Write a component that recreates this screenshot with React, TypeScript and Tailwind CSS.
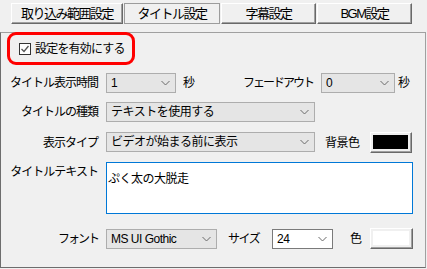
import React from "react";

const FONT = { fontFamily: '"Liberation Sans", "Noto Sans CJK JP", sans-serif' };

function Chevron() {
  return (
    <svg width="9" height="6" viewBox="0 0 9 6" className="ml-auto mr-[5px] shrink-0">
      <polyline points="0.5,1 4.5,5 8.5,1" fill="none" stroke="#6a6a6a" strokeWidth="1" />
    </svg>
  );
}

function Select({ w, text, white }: { w: string; text: string; white?: boolean }) {
  return (
    <div
      className={`flex items-center h-[20px] border pl-[4px] ${w} ${
        white ? "bg-white border-[#7a7a7a]" : "bg-[#e5e5e5] border-[#adadad]"
      }`}
    >
      <span className="text-[12px] leading-none text-black tracking-[-0.5px] whitespace-nowrap">{text}</span>
      <Chevron />
    </div>
  );
}

function Tab({ w, label, active, ml }: { w: string; label: string; active?: boolean; ml: string }) {
  return (
    <div
      className={`${w} ${ml} h-[21px] flex items-center justify-center bg-[#f0f0f0] text-[13px] leading-none tracking-[-1.5px] text-black border ${
        active
          ? "border-[#9c9c9c]"
          : "border-t-white border-l-white border-b-[#696969] border-r-[#696969] shadow-[inset_-1px_-1px_0_#a0a0a0]"
      }`}
    >
      {label}
    </div>
  );
}

function ColorBtn({ color, w }: { color: string; w: string }) {
  return (
    <div className={`${w} h-[21px] bg-[#f0f0f0] border border-t-white border-l-white border-b-[#696969] border-r-[#696969] shadow-[inset_-1px_-1px_0_#a0a0a0] p-[2px] pr-[3px] pb-[3px]`}>
      <div className="w-full h-full" style={{ background: color }} />
    </div>
  );
}

function Label({ children, cls = "" }: { children: React.ReactNode; cls?: string }) {
  return (
    <span className={`w-[97px] text-right text-[12px] leading-none text-black tracking-[-1px] whitespace-nowrap ${cls}`}>
      {children}
    </span>
  );
}

export default function App() {
  return (
    <div className="w-[427px] h-[269px] bg-[#f0f0f0] overflow-hidden" style={FONT}>
      <div className="h-[32px] flex items-start pt-[3px]">
        <Tab ml="ml-[11px]" w="w-[112px]" label="取り込み範囲設定" />
        <Tab ml="ml-[1px]" w="w-[96px]" label="タイトル設定" active />
        <Tab ml="ml-[1px]" w="w-[95px]" label="字幕設定" />
        <Tab ml="ml-[1px]" w="w-[95px]" label="BGM設定" />
      </div>
      <div className="w-[426px] h-[236px] border border-[#a0a0a0] border-l-[#6d6d6d] border-b-[#6d6d6d] flex flex-col">
        {/* enable checkbox */}
        <div className="ml-[6px] mt-[-1px] w-[128px] h-[33px] border-[3px] border-[#ff0000] rounded-[9px] flex items-center pl-[9px]">
          <svg width="12" height="12" viewBox="0 0 12 12" className="shrink-0">
            <rect x="0.5" y="0.5" width="11" height="11" fill="#fff" stroke="#333" />
            <polyline points="2.5,6 5,8.5 9.5,3" fill="none" stroke="#555" strokeWidth="1.3" />
          </svg>
          <span className="ml-[4px] text-[12px] leading-none tracking-[-0.8px] text-black whitespace-nowrap">設定を有効にする</span>
        </div>

        {/* row 1 */}
        <div className="mt-[8px] flex items-center h-[20px]">
          <Label>タイトル表示時間</Label>
          <div className="ml-[8px]">
            <Select w="w-[70px]" text="1" />
          </div>
          <span className="ml-[7px] text-[12px] leading-none">秒</span>
          <span className="w-[118px] text-right text-[12px] leading-none tracking-[-2px] whitespace-nowrap">フェードアウト</span>
          <div className="ml-[8px]">
            <Select w="w-[74px]" text="0" />
          </div>
          <span className="ml-[3px] text-[12px] leading-none">秒</span>
        </div>

        {/* row 2 */}
        <div className="mt-[9px] flex items-center h-[20px]">
          <Label>タイトルの種類</Label>
          <div className="ml-[8px]">
            <Select w="w-[209px]" text="テキストを使用する" />
          </div>
        </div>

        {/* row 3 */}
        <div className="mt-[10px] flex items-start h-[21px]">
          <Label cls="mt-[5px]">表示タイプ</Label>
          <div className="ml-[8px]">
            <Select w="w-[209px]" text="ビデオが始まる前に表示" />
          </div>
          <span className="ml-[10px] w-[45px] mt-[5px] text-[12px] leading-none tracking-[-0.5px] whitespace-nowrap">背景色</span>
          <ColorBtn color="#000" w="w-[42px]" />
        </div>

        {/* row 4 */}
        <div className="mt-[9px] flex items-start">
          <Label cls="mt-[4px]">タイトルテキスト</Label>
          <div className="ml-[8px] w-[307px] h-[52px] border border-[#0078d7] bg-white pl-[1px] pt-[3px]">
            <span className="text-[12px] leading-none tracking-[-0.5px] text-black whitespace-nowrap">ぷく太の大脱走</span>
          </div>
        </div>

        {/* row 5 */}
        <div className="mt-[14px] flex items-center h-[21px]">
          <Label cls="tracking-[-2px]">フォント</Label>
          <div className="ml-[8px]">
            <Select w="w-[111px]" text="MS UI Gothic" />
          </div>
          <span className="ml-[11px] w-[44px] text-[12px] leading-none tracking-[-1.5px] whitespace-nowrap">サイズ</span>
          <Select w="w-[61px]" text="24" white />
          <span className="ml-[17px] w-[20px] text-[12px] leading-none">色</span>
          <ColorBtn color="#fff" w="w-[43px]" />
        </div>
      </div>
    </div>
  );
}
